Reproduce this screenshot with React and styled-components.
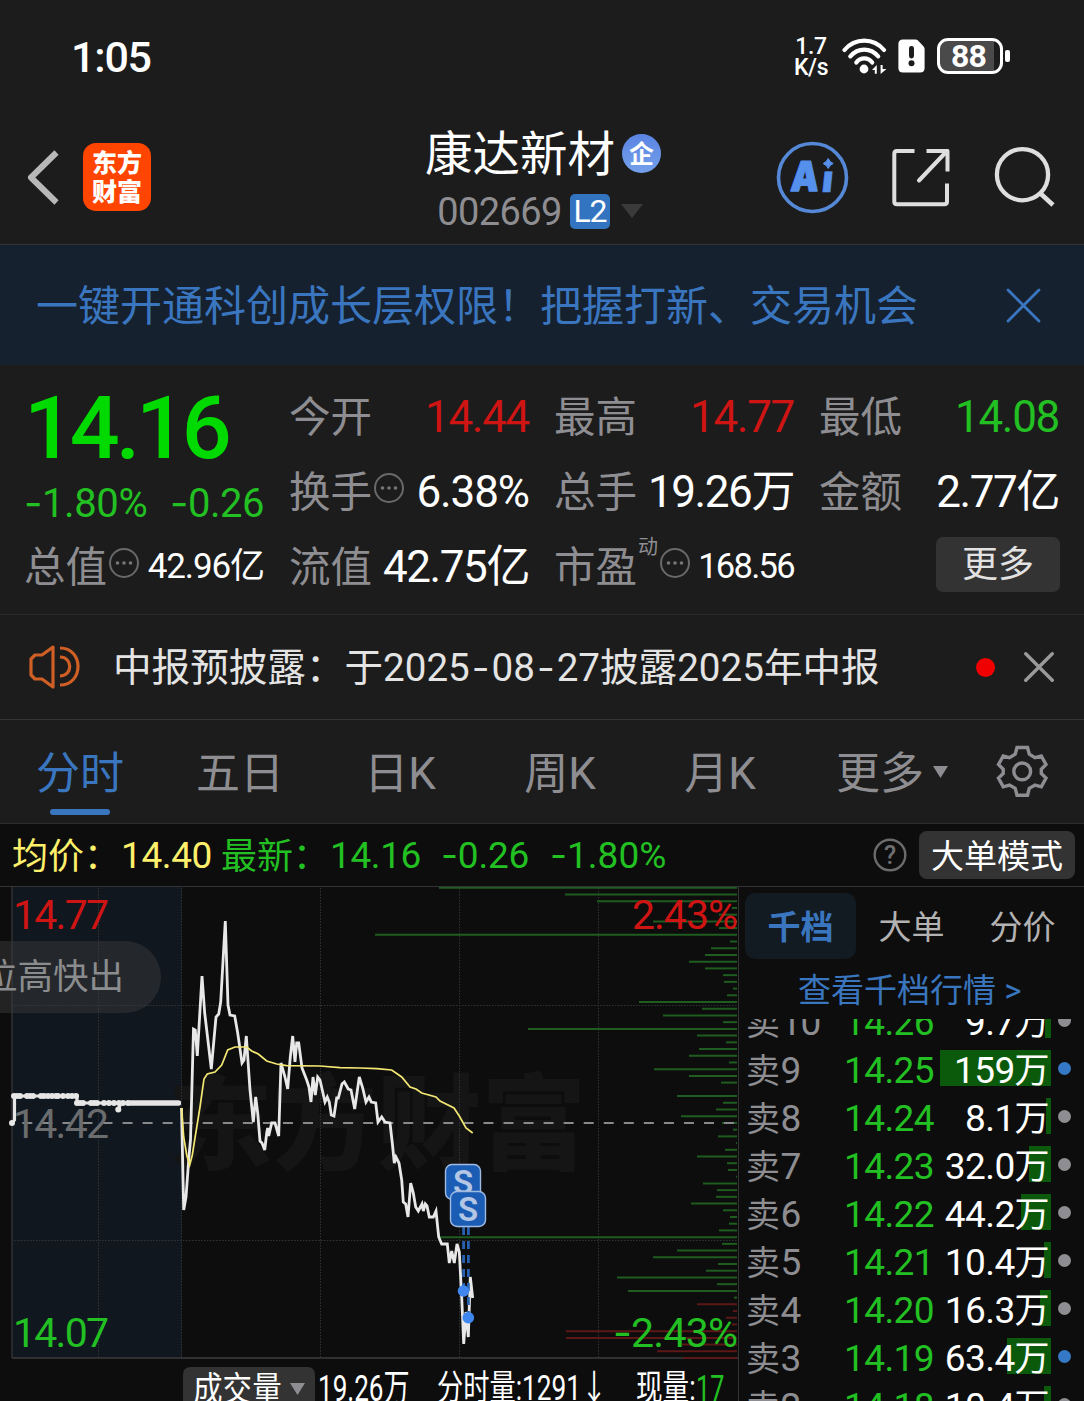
// App.jsx

import React from "react";
import styled, { createGlobalStyle } from "styled-components";

const colors = {
  bg: "#1c1c1c",
  dark: "#0d0d0d",
  line: "#343434",
  gray: "#8e8e92",
  blue: "#3a76bf",
  red: "#cf1414",
  green: "#22c022",
  yellow: "#fdf06b",
};

const GlobalStyle = createGlobalStyle`
  * {
    box-sizing: border-box;
  }
  body {
    margin: 0;
    background: ${colors.bg};
    color: #fff;
    font-family: Roboto, "Noto Sans CJK SC", sans-serif;
    overflow: hidden;
  }
`;

const Page = styled.div`
  display: flex;
  flex-direction: column;
  width: 1084px;
  height: 1401px;
  overflow: hidden;
  background: ${colors.bg};
`;

const Text = styled.span`
  display: inline-block;
  flex-shrink: 0;
  width: ${(props) => (props.$w ? `${props.$w}px` : "auto")};
  padding-top: ${(props) => props.$drop || 0}px;
  color: ${(props) => props.$color || "#fff"};
  font-size: ${(props) => props.$size}px;
  font-weight: ${(props) => props.$weight || 400};
  letter-spacing: ${(props) => props.$ls || 0}px;
  line-height: 1;
  white-space: nowrap;
`;

const Dash = styled.span`
  padding: 0 ${(props) => props.$pad || 0}px;
  font-family: Inter, sans-serif;
`;

/* status bar */
const StatusBar = styled.div`
  display: flex;
  align-items: center;
  height: 112px;
  padding: 0 74px 0 71px;
`;

const StatusIcons = styled.div`
  display: flex;
  align-items: center;
  margin-left: auto;
`;

const Speed = styled.div`
  display: flex;
  flex-direction: column;
  align-items: center;
  width: 36px;
  margin-right: 13px;
  padding-top: 1px;
  font-size: 23px;
  font-weight: 500;
  letter-spacing: -0.4px;
  line-height: 21px;
`;

const Battery = styled.div`
  display: flex;
  align-items: center;
  justify-content: center;
  width: 66px;
  height: 36px;
  margin: 0 2px 0 12px;
  padding-right: 3px;
  border: 3px solid #fff;
  border-radius: 11px;
  background: linear-gradient(90deg, #4a4a4a 54px, ${colors.bg} 54px);
  font-size: 32px;
  font-weight: 700;
  letter-spacing: -0.8px;
  line-height: 1;
`;

const BatteryTip = styled.div`
  width: 5px;
  height: 12px;
  border-radius: 2px;
  background: #fff;
`;

/* header */
const Header = styled.div`
  display: grid;
  grid-template-columns: 360px 1fr 360px;
  height: 133px;
  border-bottom: 1px solid ${colors.line};
`;

const HeaderLeft = styled.div`
  display: flex;
  align-items: flex-start;
  padding: 31px 0 0 25px;
`;

const Logo = styled.div`
  display: flex;
  flex-direction: column;
  align-items: center;
  justify-content: center;
  width: 68px;
  height: 68px;
  margin-left: 22px;
  padding-top: 2px;
  border-radius: 13px;
  background: #ff4500;
  font-size: 25px;
  font-weight: 900;
  line-height: 29px;
`;

const HeaderCenter = styled.div`
  display: flex;
  flex-direction: column;
  align-items: center;
  padding-top: 16px;
`;

const TitleRow = styled.div`
  display: flex;
  align-items: center;
  gap: 7px;
  height: 50px;
  margin-left: 2px;
`;

const CompanyBadge = styled.div`
  display: flex;
  align-items: center;
  justify-content: center;
  width: 39px;
  height: 39px;
  padding-top: 2px;
  border-radius: 50%;
  background: linear-gradient(#5a84e2, #74a0ea);
  font-size: 25px;
  font-weight: 700;
  line-height: 1;
`;

const CodeRow = styled.div`
  display: flex;
  align-items: center;
  height: 36px;
  margin: 15px 4px 0 0;
`;

const Level = styled.div`
  width: 40px;
  height: 35px;
  margin: 0 11px 0 8px;
  border-radius: 5px;
  background: #3274bf;
  font-size: 32px;
  letter-spacing: -1.4px;
  line-height: 35px;
  text-align: center;
`;

const HeaderRight = styled.div`
  display: flex;
  align-items: flex-start;
  padding: 27px 0 0 50px;
`;

/* promo banner */
const Banner = styled.div`
  display: flex;
  align-items: center;
  justify-content: space-between;
  height: 120px;
  padding: 0 43px 0 36px;
  background: #162130;
`;

/* quote */
const Quote = styled.div`
  display: grid;
  grid-template-columns: repeat(4, 240px);
  grid-template-rows: repeat(3, 75px);
  column-gap: 25px;
  height: 250px;
  padding: 13px 0 0 24px;
  border-bottom: 1px solid #292929;
`;

const Latest = styled.div`
  grid-row: span 2;
  display: flex;
  flex-direction: column;
  padding-top: 6px;
`;

const Change = styled.div`
  display: flex;
  justify-content: space-between;
  margin-top: 11px;
`;

const Cell = styled.div`
  display: flex;
  align-items: center;
  justify-content: space-between;
`;

const CellLabel = styled.div`
  display: flex;
  align-items: center;
  padding-top: 4px;
  color: ${colors.gray};
  font-size: 41.5px;
  line-height: 1;
`;

const EllipsisIcon = styled.svg`
  margin: -10px 0 0 1px;
`;

const Sup = styled.span`
  align-self: flex-start;
  margin: -10px 0 0 1px;
  font-size: 20px;
  line-height: 1;
`;

const MoreButton = styled.div`
  width: 124px;
  height: 55px;
  margin: -3px -1px 0 auto;
  border-radius: 7px;
  background: #333;
  color: #e2e2e2;
  font-size: 36px;
  line-height: 56px;
  text-align: center;
`;

/* notice */
const Notice = styled.div`
  display: flex;
  align-items: center;
  height: 105px;
  padding: 0 30px 0 28px;
  border-bottom: 1px solid ${colors.line};
`;

const NoticeText = styled(Text)`
  margin-left: 31px;
`;

const RedDot = styled.div`
  width: 19px;
  height: 19px;
  margin: 0 29px 0 auto;
  border-radius: 50%;
  background: #f00000;
`;

/* period tabs */
const Tabs = styled.div`
  display: grid;
  grid-template-columns: repeat(6, 160px) 124px;
  height: 104px;
  border-bottom: 1px solid #2d2d2d;
`;

const Tab = styled.div`
  display: flex;
  flex-direction: column;
  align-items: center;
  padding-top: 32px;
  color: ${(props) => (props.$active ? colors.blue : colors.gray)};
  font-size: 44px;
  line-height: 44px;

  &::after {
    content: "";
    width: 60px;
    height: 6px;
    margin-top: 13px;
    border-radius: 3px;
    background: ${(props) => (props.$active ? colors.blue : "transparent")};
  }
`;

const TabLabel = styled.div`
  display: flex;
  align-items: center;

  svg {
    margin: -4px -24px 0 9px;
  }
`;

const GearCell = styled.div`
  padding: 24px 0 0 35px;
`;

/* chart info */
const InfoBar = styled.div`
  display: flex;
  align-items: center;
  height: 63px;
  padding: 0 9px 0 12px;
  border-bottom: 1px solid ${colors.line};
  background: ${colors.dark};

  > svg {
    margin: 0 12px 0 auto;
  }
`;

const ModeButton = styled.div`
  width: 156px;
  height: 48px;
  border-radius: 8px;
  background: #333;
  font-size: 33px;
  line-height: 52px;
  text-align: center;
`;

/* main area */
const Main = styled.div`
  display: grid;
  grid-template-columns: 739px 345px;
  height: 514px;
  background: ${colors.dark};
`;

const ChartColumn = styled.div`
  position: relative;
  height: 514px;
  border-right: 1px solid ${colors.line};
  overflow: hidden;
`;

const ChartSvg = styled.svg`
  display: block;
`;

const Pill = styled.div`
  position: absolute;
  top: 54px;
  left: -40px;
  width: 201px;
  height: 72px;
  padding-right: 37px;
  border-radius: 36px;
  background: rgba(62, 62, 62, 0.45);
  color: #8b8c8e;
  font-size: 35.5px;
  line-height: 73px;
  text-align: right;
  white-space: nowrap;
`;

const VolumeRow = styled.div`
  display: flex;
  align-items: flex-start;
  padding: 7px 0 0 183px;
`;

const VolumeButton = styled.div`
  display: flex;
  align-items: center;
  width: 132px;
  height: 44px;
  margin-right: 3px;
  padding-left: 10px;
  border-radius: 7px;
  background: #333;
`;

const Squeezed = styled.div`
  width: ${(props) => props.$w}px;
  color: ${(props) => props.$color || "#fff"};
  font-size: ${(props) => props.$size || 34}px;
  line-height: 44px;
  white-space: nowrap;
  transform: scaleX(${(props) => props.$scale});
  transform-origin: left;
`;

const Depth = styled.div`
  display: flex;
  flex-direction: column;
  height: 514px;
  overflow: hidden;
`;

const DepthTabs = styled.div`
  display: flex;
  height: 72px;
  padding: 6px 0 0 6px;
`;

const DepthTab = styled.div`
  width: 111px;
  height: 66px;
  border-radius: 10px;
  background: ${(props) => (props.$active ? "#121a22" : "transparent")};
  color: ${(props) => (props.$active ? colors.blue : "#b2b2b2")};
  font-size: 33px;
  font-weight: ${(props) => (props.$active ? 700 : 400)};
  line-height: 70px;
  text-align: center;
`;

const DepthLink = styled.div`
  height: 60px;
  padding-left: 59px;
  color: ${colors.blue};
  font-size: 33px;
  line-height: 64px;
  white-space: nowrap;
`;

const OrderList = styled.div`
  flex: 1;
  overflow: hidden;

  > :first-child {
    margin-top: -23px;
  }
`;

const OrderRow = styled.div`
  display: grid;
  grid-template-columns: 98px 96px 111px 26px;
  align-items: center;
  height: 48px;
  padding-left: 7px;
  font-size: 37px;
  letter-spacing: -0.6px;
  line-height: 38px;
`;

const OrderLabel = styled.span`
  padding-top: 5px;
  color: ${colors.gray};
  font-size: 34px;

  b {
    margin-left: 1px;
    font-size: 37px;
    font-weight: 400;
  }
`;

const OrderPrice = styled.span`
  padding-top: 5px;
  color: ${colors.green};
`;

const OrderVolume = styled.span`
  height: 36px;
  padding-right: 2px;
  background: linear-gradient(#0b5a0b, #0b5a0b) no-repeat right / ${(props) => props.$bar}px 100%;
  line-height: 41px;
  text-align: right;
  white-space: nowrap;

  i {
    font-size: 35px;
    font-style: normal;
  }
`;

const OrderDot = styled.span`
  width: 13px;
  height: 13px;
  margin-left: 7px;
  border-radius: 50%;
  background: ${(props) => (props.$active ? "#3579c6" : "#8e8e92")};
`;

const orders = [
  { level: 10, price: "14.26", volume: "9.7", bar: 6 },
  { level: 9, price: "14.25", volume: "159", bar: 111, active: true },
  { level: 8, price: "14.24", volume: "8.1", bar: 5 },
  { level: 7, price: "14.23", volume: "32.0", bar: 22 },
  { level: 6, price: "14.22", volume: "44.2", bar: 30 },
  { level: 5, price: "14.21", volume: "10.4", bar: 7 },
  { level: 4, price: "14.20", volume: "16.3", bar: 11 },
  { level: 3, price: "14.19", volume: "63.4", bar: 44, active: true },
  { level: 2, price: "14.18", volume: "10.4", bar: 7 },
];

// one bar per price tick, 14.77 down to 14.07
const depthBars = [
  298, 172, 140, 5, 18, 84, 18, 362, 7, 26, 32, 48, 32, 14, 13, 4, 10, 98, 35,
  74, 14, 209, 40, 11, 38, 48, 8, 83, 48, 16, 0, 60, 14, 21, 56, 15, 4, 19, 1,
  12, 40, 10, 9, 1, 34, 20, 21, 46, 14, 7, 8, 18, 298, 15, 60, 84, 19, 31, 120,
  20, 109, 3, 40, 4, 11, 5, 171, 171, 55, 80, 54,
];
const firstBuyBar = 62;

const pricePoints =
  "181.5,1108 183.7,1210 186,1197 189,1156 190.5,1140 193.5,1029 195.3,1030 197.3,1056 202,976 204.7,1013 211.3,1069 216,1017 218.7,1014 220.7,1002 225.3,921 228,1005 230,1015 234.7,1016 237.7,1033 242,1063 244,1060 246.3,1036 250,1090 253.3,1122 255.7,1097 257.7,1113 260,1141 262,1143 264.7,1150 266.7,1133 267.7,1128 268.7,1136 271.7,1123 275,1123 278.7,1136 281,1063 285,1077 287.7,1089 290.3,1057 292.7,1036 295,1062 296.7,1043 298.7,1043 302,1068 306.7,1080 309,1087 311,1102 313,1077 315.3,1095 317.7,1077 320,1080 325,1102 327.3,1097 329.3,1102 331.3,1115 334,1116 336.7,1098 338.3,1098 342,1084 344.3,1082 348.3,1089 351,1090 354.7,1109 359.3,1077 362.7,1088 366,1102 369,1097 371.3,1102 375.7,1103 378,1122 381.7,1117 385,1122 390,1123 392.3,1143 394.3,1163 396,1157 399,1163 401.7,1180 403.3,1202 405.7,1204 408,1217 410.7,1183 413.3,1193 415.7,1207 418.3,1211 422,1204 423.3,1211 425.3,1204 427,1206 429.3,1217 433.3,1217 436,1211 438.7,1237 441.7,1244 447.3,1244 449.3,1263 451.7,1251 454.3,1263 457,1244 459.3,1252 461.7,1297 463.7,1344 466,1312 468.3,1337 470.3,1277 472.7,1298";

const avgPoints =
  "181.5,1108 183.7,1137 186.7,1155 189.7,1165 192.3,1155 195,1138 200,1107 204,1079 207.3,1074 215,1072 221.7,1065 227.7,1050 235,1047 246.7,1047 251.7,1051 258.3,1054 266.7,1061 276.7,1064 286.7,1065.7 320,1066 340,1067.7 360,1068 376.7,1068.7 391.7,1070 401.7,1077 410,1087 416,1089 421.7,1093 436,1097 440,1101 454,1108 459.3,1116 466,1128 472.7,1133";

const preOpenDots = [14, 17, 20, 27, 30, 33, 41, 44, 48, 52, 56, 58, 63, 68, 72, 76];
const preOpenDots2 = [77, 80, 83, 91, 94, 97, 104, 109, 114, 119, 123, 128];

const Ellipsis = () => (
  <EllipsisIcon width="32" height="30" viewBox="0 0 32 30">
    <circle cx="16" cy="15" r="14" fill="none" stroke="#69696b" strokeWidth="2" />
    <circle cx="9.5" cy="15" r="1.8" fill="#77777a" />
    <circle cx="16" cy="15" r="1.8" fill="#77777a" />
    <circle cx="22.5" cy="15" r="1.8" fill="#77777a" />
  </EllipsisIcon>
);

const Cross = ({ size, color, width }) => (
  <svg width={size} height={size} viewBox="0 0 34 34">
    <path
      d="M2 2 L32 32 M32 2 L2 32"
      stroke={color}
      strokeWidth={width}
      strokeLinecap="round"
    />
  </svg>
);

const Triangle = ({ w, h, color }) => (
  <svg width={w} height={h} viewBox="0 0 10 10" preserveAspectRatio="none">
    <polygon points="0 0 10 0 5 10" fill={color} />
  </svg>
);

const WifiIcon = () => (
  <svg width="45" height="36" viewBox="0 0 45 36">
    <g fill="none" stroke="#fff" strokeWidth="4.2" strokeLinecap="round">
      <path d="M2.5 12 C13 -0.5 31.5 -0.5 42 12" />
      <path d="M8.3 18.3 C16 9.3 28.5 9.3 36.2 18.3" />
      <path d="M14.3 24.5 C18.5 19 26 19 30.2 24.5" />
    </g>
    <circle cx="22" cy="31" r="4.4" fill="#fff" />
    <path d="M30 32 L34.8 27 V35.8 H32.8 V32 Z" fill="#fff" />
    <path d="M44.5 31 L38.6 36 V27 H40.6 V31 Z" fill="#fff" />
  </svg>
);

const SimIcon = () => (
  <svg width="38" height="34" viewBox="-11 0 38 34">
    <path
      d="M5 0.5 H17.5 Q19 0.5 20 1.6 L25.6 7.4 Q26.6 8.5 26.6 10 V29 Q26.6 33.5 22 33.5 H5 Q0.4 33.5 0.4 29 V5 Q0.4 0.5 5 0.5 Z"
      fill="#fff"
    />
    <rect x="11" y="7" width="5" height="12.5" rx="2.4" fill="#1c1c1c" />
    <circle cx="13.5" cy="24.3" r="3" fill="#1c1c1c" />
  </svg>
);

const BackIcon = () => (
  <svg width="36" height="68" viewBox="0 0 36 68">
    <path
      d="M31.5 9.5 L6 34.5 L31.5 59.5"
      fill="none"
      stroke="#b8b8b8"
      strokeWidth="6"
      strokeLinejoin="round"
    />
  </svg>
);

const HeaderIcons = () => (
  <svg width="310" height="76" viewBox="774 139 310 76">
    <circle cx="812.5" cy="177.5" r="34" fill="none" stroke="#5588d6" strokeWidth="3.6" />
    <g
      fill="#5590ec"
      stroke="#5590ec"
      strokeLinejoin="round"
      fontFamily="Inter, sans-serif"
      fontWeight="900"
    >
      <text
        transform="translate(790 191) skewX(-4)"
        fontSize="41"
        strokeWidth="1.4"
        textLength="28"
        lengthAdjust="spacingAndGlyphs"
      >
        A
      </text>
      <text transform="translate(821 192) skewX(-6)" fontSize="37" strokeWidth="0.6">
        ı
      </text>
      <path
        d="M828.2 158.5 Q829.7 162 833.2 163.5 Q829.7 165 828.2 168.5 Q826.7 165 823.2 163.5 Q826.7 162 828.2 158.5 Z"
        strokeWidth="1"
      />
    </g>
    <g fill="none" stroke="#dedede" strokeWidth="4" strokeLinejoin="round">
      <path d="M914.5 151 H897 Q894.3 151 894.3 153.7 V201.5 Q894.3 204.3 897 204.3 H944.3 Q947 204.3 947 201.5 V183.5" />
      <path d="M926.5 151 H947.5 V171.5" />
      <path d="M947 151 L919 180.5" strokeLinecap="round" />
      <circle cx="1022.5" cy="174.7" r="25.6" strokeWidth="4.3" />
      <path d="M1040.5 193.5 L1053 205" strokeWidth="4.6" />
    </g>
  </svg>
);

const SpeakerIcon = () => (
  <svg width="54" height="46" viewBox="0 0 54 46">
    <g fill="none" stroke="#cf5f25" strokeWidth="3.2" strokeLinejoin="round">
      <path d="M25 3 L14 11 H7 L3 15 V31 L7 35 H14 L25 43 Z" />
      <path d="M32 4 C56 4 56 41 32 41" />
      <path d="M32 13 C45 13 45 32 32 32" />
    </g>
  </svg>
);

const GearIcon = () => (
  <svg width="54" height="54" viewBox="0 0 54 54">
    <g fill="none" stroke="#8e8e92" strokeWidth="3.4">
      <path d="M22 3.5 H32.5 L34.3 10.2 L40 13.6 L46.3 12 L51 20.5 L46.3 25.3 V29.5 L51 34 L46.3 42.8 L40 41 L34.3 44.4 L32.5 51.3 H22 L20.2 44.4 L14.5 41 L8.2 42.8 L3.5 34 L8.2 29.5 V25.3 L3.5 20.5 L8.2 12 L14.5 13.6 L20.2 10.2 Z" />
      <circle cx="27.2" cy="27.4" r="8.4" />
    </g>
  </svg>
);

const HelpIcon = () => (
  <svg width="34" height="34" viewBox="0 0 34 34">
    <circle cx="17" cy="17" r="15.3" fill="none" stroke="#6b6b6b" strokeWidth="2.4" />
    <text x="17" y="25.5" fill="#6f6f6f" fontSize="25" fontWeight="500" textAnchor="middle">
      ?
    </text>
  </svg>
);

const SellMark = ({ x, y }) => (
  <g>
    <rect
      x={x}
      y={y}
      width="35"
      height="35"
      rx="6.5"
      fill="#1b5db4"
      stroke="#9fbbe2"
      strokeWidth="1.4"
    />
    <text
      x={x + 17.5}
      y={y + 29.5}
      fill="#b3c6e4"
      fontSize="33"
      fontWeight="600"
      textAnchor="middle"
    >
      S
    </text>
  </g>
);

const Chart = () => (
  <ChartSvg width="738" height="473" viewBox="0 887 738 473">
    <rect x="12" y="887" width="170" height="471" fill="#10171f" />
    <text
      x="168"
      y="1162"
      fill="#151515"
      fontFamily="Noto Sans CJK SC, sans-serif"
      fontSize="104"
      fontWeight="900"
      textLength="418"
      lengthAdjust="spacingAndGlyphs"
    >
      东方财富
    </text>
    {/* grid */}
    <g stroke="#333436" strokeWidth="1" strokeDasharray="1.5 1.5">
      {[98.5, 181.5, 320.5, 459.5, 598.5].map((x) => (
        <line key={x} x1={x} y1="888" x2={x} y2="1357" />
      ))}
      <line x1="12" y1="1005.5" x2="737" y2="1005.5" />
      <line x1="12" y1="1240.5" x2="737" y2="1240.5" />
    </g>
    <line x1="12" y1="887" x2="12" y2="1358" stroke="#2c2f33" strokeWidth="1.6" />
    <line x1="12" y1="1358" x2="738" y2="1358" stroke="#303030" strokeWidth="2" />
    {/* order book depth */}
    {depthBars.map((len, i) => (
      <line
        key={i}
        x1={737 - len}
        x2="737"
        y1={887.8 + i * 6.718}
        y2={887.8 + i * 6.718}
        stroke={i < firstBuyBar ? "#1f5c20" : "#5c1717"}
        strokeWidth="2"
      />
    ))}
    <line
      x1="22.3"
      y1="1123"
      x2="737"
      y2="1123"
      stroke="#87898b"
      strokeWidth="1.8"
      strokeDasharray="10 10.05"
    />
    <text x="13" y="1138" fontSize="41" fill="#6b6c6e" textLength="96">
      14.42
    </text>
    {/* pre-open auction */}
    <path
      d="M12 1123 L14.5 1120 V1096 H77 V1103 H181 M118 1110 L121 1103"
      fill="none"
      stroke="#e6e6e6"
      strokeWidth="3.2"
    />
    <circle cx="12" cy="1123" r="3" fill="#e6e6e6" />
    <g fill="#e6e6e6">
      {preOpenDots.map((x) => (
        <circle key={x} cx={x} cy="1096" r="3" />
      ))}
      {preOpenDots2.map((x) => (
        <circle key={x} cx={x} cy="1103" r="3" />
      ))}
      <circle cx="118.3" cy="1109.5" r="3" />
      <rect x="128" y="1100.2" width="53" height="5.6" rx="2.5" />
    </g>
    <polyline points={pricePoints} fill="none" stroke="#e8e8e8" strokeWidth="2.8" />
    <polyline points={avgPoints} fill="none" stroke="#f3e773" strokeWidth="1.7" />
    {/* sell points */}
    <g stroke="#2860b0" strokeWidth="2.8" strokeDasharray="8 6">
      <line x1="463.6" y1="1227" x2="463.6" y2="1291" />
      <line x1="468.4" y1="1227" x2="468.4" y2="1317" />
    </g>
    <circle cx="463.5" cy="1291" r="5.8" fill="#3f87ee" />
    <circle cx="468.3" cy="1317.7" r="5.8" fill="#3f87ee" />
    <SellMark x={445.5} y={1164.5} />
    <SellMark x={450.5} y={1191.5} />
    <g fontSize="41">
      <text x="13" y="929" fill={colors.red} textLength="96">
        14.77
      </text>
      <text x="13" y="1347" fill={colors.green} textLength="96">
        14.07
      </text>
      <text x="632" y="929" fill={colors.red} textLength="106">
        2.43%
      </text>
      <text x="613" y="1347" fill={colors.green} textLength="125">
        <tspan fontFamily="Inter, sans-serif">-</tspan>2.43%
      </text>
    </g>
  </ChartSvg>
);

const App = () => (
  <>
    <GlobalStyle />
    <Page>
      <StatusBar>
        <Text $size={43} $weight={500} $ls={-1.2} $drop={3}>
          1:05
        </Text>
        <StatusIcons>
          <Speed>
            <span>1.7</span>
            <span>K/s</span>
          </Speed>
          <WifiIcon />
          <SimIcon />
          <Battery>88</Battery>
          <BatteryTip />
        </StatusIcons>
      </StatusBar>

      <Header>
        <HeaderLeft>
          <BackIcon />
          <Logo>
            <span>东方</span>
            <span>财富</span>
          </Logo>
        </HeaderLeft>
        <HeaderCenter>
          <TitleRow>
            <Text $size={47.5} $drop={5}>
              康达新材
            </Text>
            <CompanyBadge>企</CompanyBadge>
          </TitleRow>
          <CodeRow>
            <Text $size={38} $color={colors.gray} $ls={-0.6} $drop={1}>
              002669
            </Text>
            <Level>L2</Level>
            <Triangle w={22} h={14} color="#3b3b3b" />
          </CodeRow>
        </HeaderCenter>
        <HeaderRight>
          <HeaderIcons />
        </HeaderRight>
      </Header>

      <Banner>
        <Text $size={42} $color={colors.blue} $drop={4}>
          一键开通科创成长层权限！把握打新、交易机会
        </Text>
        <Cross size={35} color={colors.blue} width={2.8} />
      </Banner>

      <Quote>
        <Latest>
          <Text $size={88} $weight={500} $color="#00da00" $ls={-4.2}>
            14.16
          </Text>
          <Change>
            <Text $size={40} $color={colors.green} $ls={-0.4}>
              <Dash>-</Dash>1.80%
            </Text>
            <Text $size={40} $color={colors.green} $ls={-0.5}>
              <Dash>-</Dash>0.26
            </Text>
          </Change>
        </Latest>
        <Cell>
          <CellLabel>今开</CellLabel>
          <Text $size={44} $color={colors.red} $ls={-1.3} $drop={2}>
            14.44
          </Text>
        </Cell>
        <Cell>
          <CellLabel>最高</CellLabel>
          <Text $size={44} $color={colors.red} $ls={-1.3} $drop={2}>
            14.77
          </Text>
        </Cell>
        <Cell>
          <CellLabel>最低</CellLabel>
          <Text $size={44} $color={colors.green} $ls={-1.3} $drop={2}>
            14.08
          </Text>
        </Cell>
        <Cell>
          <CellLabel>
            换手
            <Ellipsis />
          </CellLabel>
          <Text $size={44} $ls={-1.1} $drop={2}>
            6.38%
          </Text>
        </Cell>
        <Cell>
          <CellLabel>总手</CellLabel>
          <Text $size={44} $ls={-1.4} $drop={2}>
            19.26万
          </Text>
        </Cell>
        <Cell>
          <CellLabel>金额</CellLabel>
          <Text $size={44} $ls={-1.4} $drop={2}>
            2.77亿
          </Text>
        </Cell>
        <Cell>
          <CellLabel>
            总值
            <Ellipsis />
          </CellLabel>
          <Text $size={35} $ls={-1.1} $drop={2}>
            42.96亿
          </Text>
        </Cell>
        <Cell>
          <CellLabel>流值</CellLabel>
          <Text $size={44} $ls={-1.4} $drop={2}>
            42.75亿
          </Text>
        </Cell>
        <Cell>
          <CellLabel>
            市盈
            <Sup>动</Sup>
            <Ellipsis />
          </CellLabel>
          <Text $size={34.5} $ls={-1.7} $drop={2}>
            168.56
          </Text>
        </Cell>
        <Cell>
          <MoreButton>更多</MoreButton>
        </Cell>
      </Quote>

      <Notice>
        <SpeakerIcon />
        <NoticeText $size={38.6} $color="#e4e4e4" $drop={1}>
          中报预披露：于2025<Dash $pad={2}>-</Dash>08<Dash $pad={2}>-</Dash>27披露2025年中报
        </NoticeText>
        <RedDot />
        <Cross size={30} color="#9a9a9a" width={3.8} />
      </Notice>

      <Tabs>
        {["分时", "五日", "日K", "周K", "月K"].map((name, i) => (
          <Tab key={name} $active={i === 0}>
            {name}
          </Tab>
        ))}
        <Tab>
          <TabLabel>
            更多
            <Triangle w={15} h={12} color={colors.gray} />
          </TabLabel>
        </Tab>
        <GearCell>
          <GearIcon />
        </GearCell>
      </Tabs>

      <InfoBar>
        <Text $size={36} $w={109} $color={colors.yellow} $drop={4}>
          均价：
        </Text>
        <Text $size={37} $w={100} $color={colors.yellow} $ls={-0.4} $drop={1}>
          14.40
        </Text>
        <Text $size={36} $w={109} $color={colors.green} $drop={4}>
          最新：
        </Text>
        <Text $size={37} $w={111} $color={colors.green} $ls={-0.4} $drop={1}>
          14.16
        </Text>
        <Text $size={37} $w={109} $color={colors.green} $ls={-0.2}>
          <Dash>-</Dash>0.26
        </Text>
        <Text $size={37} $color={colors.green}>
          <Dash>-</Dash>1.80%
        </Text>
        <HelpIcon />
        <ModeButton>大单模式</ModeButton>
      </InfoBar>

      <Main>
        <ChartColumn>
          <Chart />
          <Pill>位高快出</Pill>
          <VolumeRow>
            <VolumeButton>
              <Squeezed $w={97} $scale={0.87}>
                成交量
              </Squeezed>
              <Triangle w={15} h={12} color={colors.gray} />
            </VolumeButton>
            <Squeezed $w={119} $scale={0.705} $size={37}>
              19.26万
            </Squeezed>
            <Squeezed $w={199} $scale={0.75} $size={35}>
              分时量:1291↓
            </Squeezed>
            <Squeezed $w={60} $scale={0.76} $size={35}>
              现量:
            </Squeezed>
            <Squeezed $w={40} $scale={0.68} $size={37} $color={colors.green}>
              17
            </Squeezed>
          </VolumeRow>
        </ChartColumn>
        <Depth>
          <DepthTabs>
            <DepthTab $active>千档</DepthTab>
            <DepthTab>大单</DepthTab>
            <DepthTab>分价</DepthTab>
          </DepthTabs>
          <DepthLink>查看千档行情 &gt;</DepthLink>
          <OrderList>
            {orders.map((order) => (
              <OrderRow key={order.level}>
                <OrderLabel>
                  卖<b>{order.level}</b>
                </OrderLabel>
                <OrderPrice>{order.price}</OrderPrice>
                <OrderVolume $bar={order.bar}>
                  {order.volume}
                  <i>万</i>
                </OrderVolume>
                <OrderDot $active={order.active} />
              </OrderRow>
            ))}
          </OrderList>
        </Depth>
      </Main>
    </Page>
  </>
);

export default App;
